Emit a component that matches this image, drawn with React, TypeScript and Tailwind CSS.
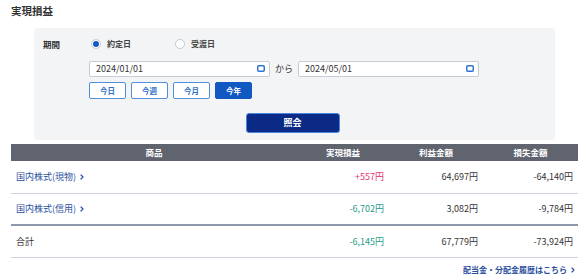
import { ChevronRight } from "lucide-react";

const FONT = { fontFamily: '"Noto Sans CJK JP", "Noto Sans", sans-serif' };

const ROWS = [
  { name: "国内株式(現物)", pl: "+557円", plColor: "text-[#e6336d]", gain: "64,697円", loss: "-64,140円" },
  { name: "国内株式(信用)", pl: "-6,702円", plColor: "text-[#1f9b8c]", gain: "3,082円", loss: "-9,784円" },
];

function CalendarIcon() {
  return (
    <svg width="8" height="7" viewBox="0 0 8 7" className="shrink-0">
      <rect x="0.75" y="0.75" width="6.5" height="5.5" rx="1" fill="none" stroke="#2f74d0" strokeWidth="1.5" />
    </svg>
  );
}

function DateInput({ value }: { value: string }) {
  return (
    <div className="flex h-[16px] w-[181px] items-center justify-between rounded-[2px] border border-[#c6cbd6] bg-white pl-[6px] pr-[4px] text-[9px] text-[#333]">
      <span>{value}</span>
      <CalendarIcon />
    </div>
  );
}

function Radio({ checked, label }: { checked: boolean; label: string }) {
  return (
    <div className="flex items-center gap-[6px]">
      <span className="flex h-[10px] w-[10px] items-center justify-center rounded-full border border-[#c5cad6] bg-white">
        {checked && <span className="h-[6px] w-[6px] rounded-full bg-[#1456c8]" />}
      </span>
      <span className="text-[8px] font-bold text-[#444]">{label}</span>
    </div>
  );
}

export default function App() {
  return (
    <div className="h-[280px] w-[586px] overflow-hidden bg-white" style={FONT}>
      <h1 className="pl-[11px] pt-[3px] text-[10.5px] font-bold leading-[16px] text-[#333]">実現損益</h1>

      {/* search panel */}
      <div className="ml-[34px] mt-[9px] h-[112px] w-[521px] rounded-[3px] bg-[#f3f4f6] pt-[10px]">
        <div className="flex items-center">
          <span className="w-[55px] pl-[9px] text-[8.5px] font-bold text-[#333]">期間</span>
          <div className="ml-[2px] flex gap-[44px]">
            <Radio checked label="約定日" />
            <Radio checked={false} label="受渡日" />
          </div>
        </div>
        <div className="mt-[10px] flex items-center pl-[55px]">
          <DateInput value="2024/01/01" />
          <span className="px-[5px] text-[9px] text-[#333]">から</span>
          <DateInput value="2024/05/01" />
        </div>
        <div className="mt-[5px] flex gap-[5px] pl-[55px]">
          {["今日", "今週", "今月", "今年"].map((t, i) => (
            <button
              key={t}
              className={`h-[17px] w-[37px] rounded-[2px] border text-[7.5px] font-bold ${
                i === 3
                  ? "border-[#1258c3] bg-[#1258c3] text-white"
                  : "border-[#4f8fdc] bg-white text-[#2d6fc8]"
              }`}
            >
              {t}
            </button>
          ))}
        </div>
        <div className="mt-[14px] flex justify-center pr-[4px]">
          <button className="h-[20px] w-[94px] rounded-[3px] border border-[#4a86e0] bg-[#0b2a85] text-[9px] font-bold text-white">
            照会
          </button>
        </div>
      </div>

      {/* table */}
      <table className="ml-[11px] mt-[4px] w-[567px] border-collapse text-[9px]">
        <thead>
          <tr className="h-[17px] bg-[#60646f] text-[8.5px] font-bold text-white">
            <th className="w-[286px] text-center font-bold">商品</th>
            <th className="w-[92px] text-center font-bold">実現損益</th>
            <th className="w-[94px] text-center font-bold">利益金額</th>
            <th className="text-center font-bold">損失金額</th>
          </tr>
        </thead>
        <tbody>
          {ROWS.map((r, i) => (
            <tr
              key={r.name}
              className={`h-[32px] ${i === ROWS.length - 1 ? "border-b-2 border-[#8d97ab]" : "border-b border-[#cdd3de]"}`}
            >
              <td className="pl-[5px]">
                <span className="flex items-center gap-[2px] text-[#2b4f9e]">
                  {r.name}
                  <ChevronRight size={8} strokeWidth={3.5} />
                </span>
              </td>
              <td className={`pr-[5px] text-right ${r.plColor}`}>{r.pl}</td>
              <td className="pr-[5px] text-right text-[#333]">{r.gain}</td>
              <td className="pr-[5px] text-right text-[#333]">{r.loss}</td>
            </tr>
          ))}
          <tr className="h-[32px] border-b border-[#cdd3de]">
            <td className="pl-[5px] text-[#333]">合計</td>
            <td className="pr-[5px] text-right text-[#1f9b8c]">-6,145円</td>
            <td className="pr-[5px] text-right text-[#333]">67,779円</td>
            <td className="pr-[5px] text-right text-[#333]">-73,924円</td>
          </tr>
        </tbody>
      </table>

      <div className="mr-[9px] mt-[6px] flex justify-end">
        <span className="flex items-center gap-[2px] text-[8px] font-bold text-[#2b4f9e]">
          配当金・分配金履歴はこちら
          <ChevronRight size={8} strokeWidth={3.5} />
        </span>
      </div>
    </div>
  );
}
